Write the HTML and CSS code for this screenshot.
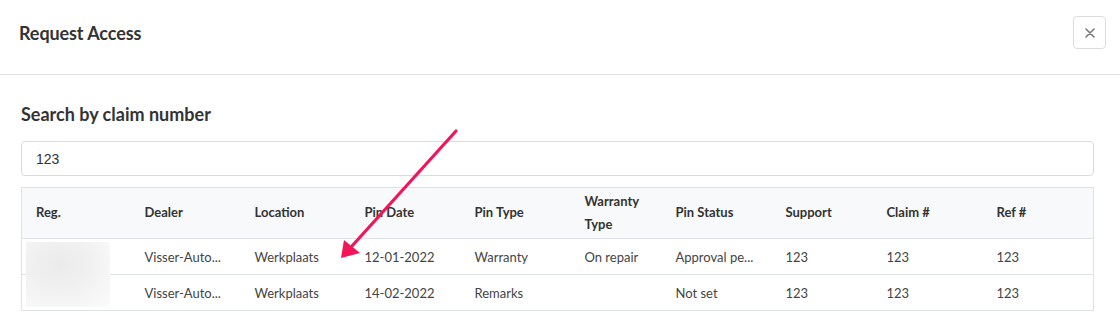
FILE: index.html
```html
<!DOCTYPE html>
<html lang="en">
<head>
    <meta charset="UTF-8">
    <meta name="viewport" content="width=device-width, initial-scale=1.0">
    <title>Request Access</title>
    <link rel="stylesheet" href="styles.css">
</head>
<body>
    <div class="modal">
        <div class="modal-header">
            <h2 class="modal-title">Request Access</h2>
            <button class="close-btn" type="button" aria-label="Close">
                <svg width="10" height="10" viewBox="0 0 10 10">
                    <path d="M1 1L9 9M9 1L1 9" stroke="currentColor" stroke-width="1.6" stroke-linecap="round"/>
                </svg>
            </button>
        </div>

        <div class="modal-body">
            <h3 class="search-title">Search by claim number</h3>
            <input class="search-input" type="text" value="123">

            <div class="table-wrap">
                <table class="claims">
                    <colgroup>
                        <col style="width:109px">
                        <col style="width:110px">
                        <col style="width:110px">
                        <col style="width:110px">
                        <col style="width:110px">
                        <col style="width:91px">
                        <col style="width:110px">
                        <col style="width:101px">
                        <col style="width:110px">
                        <col style="width:111px">
                    </colgroup>
                    <thead>
                        <tr>
                            <th>Reg.</th>
                            <th>Dealer</th>
                            <th>Location</th>
                            <th>Pin Date</th>
                            <th>Pin Type</th>
                            <th>Warranty Type</th>
                            <th>Pin Status</th>
                            <th>Support</th>
                            <th>Claim #</th>
                            <th>Ref #</th>
                        </tr>
                    </thead>
                    <tbody>
                        <tr>
                            <td></td>
                            <td>Visser-Auto...</td>
                            <td>Werkplaats</td>
                            <td>12-01-2022</td>
                            <td>Warranty</td>
                            <td>On repair</td>
                            <td>Approval pe...</td>
                            <td>123</td>
                            <td>123</td>
                            <td>123</td>
                        </tr>
                        <tr>
                            <td></td>
                            <td>Visser-Auto...</td>
                            <td>Werkplaats</td>
                            <td>14-02-2022</td>
                            <td>Remarks</td>
                            <td></td>
                            <td>Not set</td>
                            <td>123</td>
                            <td>123</td>
                            <td>123</td>
                        </tr>
                    </tbody>
                </table>
                <!-- redacted registration plates -->
                <div class="blurred"></div>
            </div>
        </div>
    </div>

    <!-- annotation arrow -->
    <svg class="annotation" width="1120" height="315" viewBox="0 0 1120 315">
        <line x1="456" y1="131" x2="352" y2="246" stroke="#f2155a" stroke-width="3.2" stroke-linecap="round"/>
        <polygon points="341,258 344,240 360,253" fill="#f2155a"/>
    </svg>
</body>
</html>
```

FILE: styles.css
```css
:root {
    --text: #333;
    --border: #dee2e6;
    --head-bg: #f8f9fa;
}

body {
    margin: 0;
    background: #fff;
    color: var(--text);
    font-family: 'Lato', 'Noto Sans', sans-serif;
    position: relative;
    overflow: hidden;
}

.modal-header {
    display: flex;
    justify-content: space-between;
    align-items: flex-start;
    height: 74px;
    padding: 0 14px 0 19px;
    border-bottom: 1px solid var(--border);
}

.modal-title {
    margin: 0;
    padding-top: 20px;
    font-size: 18px;
    line-height: 27px;
    font-weight: 700;
    color: #333;
    letter-spacing: -0.1px;
}

.close-btn {
    margin-top: 16px;
    width: 33px;
    height: 33px;
    padding: 0;
    display: grid;
    place-items: center;
    background: #fff;
    border: 1px solid #ddd;
    border-radius: 4px;
    color: #777;
}

.modal-body {
    padding: 26px 26px 0 21px;
}

.search-title {
    margin: 0 0 13px;
    font-size: 18px;
    line-height: 27px;
    font-weight: 700;
    color: #333;
}

.search-input {
    display: block;
    box-sizing: border-box;
    width: 100%;
    height: 35px;
    margin: 0 0 11px;
    padding: 0 14px;
    border: 1px solid #d9dcdf;
    border-radius: 4px;
    font-family: 'Liberation Sans', Arial, sans-serif;
    font-size: 14px;
    color: #333;
}

.table-wrap {
    position: relative;
}

.claims {
    width: 1072px;
    table-layout: fixed;
    border-collapse: collapse;
    font-size: 13px;
    border: 1px solid var(--border);
}

.claims th {
    background: var(--head-bg);
    text-align: left;
    font-weight: 700;
    line-height: 23.5px;
    height: 50px;
    padding: 0 14px;
    vertical-align: middle;
    border-bottom: 1px solid var(--border);
    color: #333;
}

.claims td {
    height: 35px;
    padding: 0 14px;
    line-height: 20px;
    vertical-align: middle;
    border-bottom: 1px solid var(--border);
    color: #444;
    white-space: nowrap;
}

.blurred {
    position: absolute;
    left: 5px;
    top: 55px;
    width: 84px;
    height: 65px;
    background: radial-gradient(ellipse at 40% 35%, #ebebeb 0%, #f0f0f0 40%, #f7f7f7 75%, #fbfbfb 100%);
}

.annotation {
    position: absolute;
    left: 0;
    top: 0;
    pointer-events: none;
}
```
